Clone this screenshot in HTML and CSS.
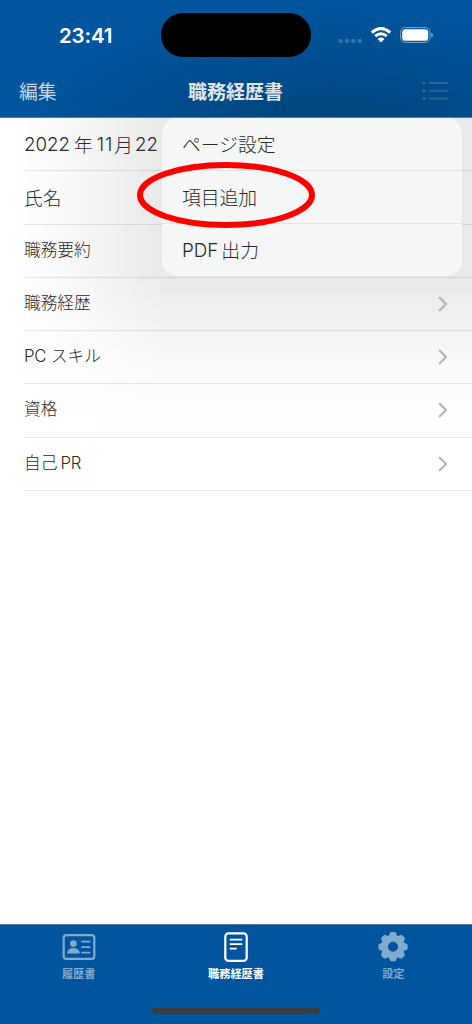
FILE: index.html
```html
<!DOCTYPE html>
<html lang="ja">
<head>
<meta charset="utf-8">
<title>職務経歴書</title>
<link rel="stylesheet" href="styles.css">
</head>
<body>
<div class="screen">
  <header class="header">
    <div class="status">
      <span class="time">23:41</span>
      <span class="island"></span>
      <div class="indicators">
        <svg class="cell" width="24" height="6" viewBox="0 0 24 6"><circle cx="2.6" cy="3" r="2.3"/><circle cx="9" cy="3" r="2.3"/><circle cx="15.4" cy="3" r="2.3"/><circle cx="21.8" cy="3" r="2.3"/></svg>
        <svg class="wifi" width="22" height="16" viewBox="0 0 22 16"><path d="M1.8 5.6Q11-2.6 20.2 5.6M5.2 9.1Q11 4.2 16.8 9.1" fill="none" stroke="#fff" stroke-width="2.9"/><path d="M7.6 12Q11 9.2 14.4 12L11 15.5Z" fill="#fff"/></svg>
        <svg class="battery" width="34" height="16" viewBox="0 0 34 16"><rect x=".6" y=".6" width="29.4" height="14.8" rx="4.8" fill="none" stroke="#7fa8ce" stroke-width="1"/><rect x="2.2" y="2.2" width="26" height="11.6" rx="3.4" fill="#fff"/><path d="M31.3 5.7Q33 6.3 33 8T31.3 10.3Z" fill="#7fa8ce"/></svg>
      </div>
    </div>
    <nav class="navbar">
      <span class="edit">編集</span>
      <h1 class="title">職務経歴書</h1>
      <svg class="list-icon" width="28" height="20" viewBox="0 0 28 20"><g fill="#2d659a"><circle cx="2" cy="2" r="1.6"/><circle cx="2" cy="9.8" r="1.6"/><circle cx="2" cy="17.6" r="1.6"/></g><path d="M7.5 2H25.5M7.5 9.8H25.5M7.5 17.6H25.5" stroke="#2d659a" stroke-width="1.8" stroke-linecap="round"/></svg>
    </nav>
  </header>
  <main class="content">
    <ul class="rows">
      <li class="row large date"><span class="latin">2022</span><span class="kanji year">年</span><span class="latin month">11</span><span class="kanji">月</span><span class="latin day">22</span></li>
      <li class="row large">氏名</li>
      <li class="row">職務要約</li>
      <li class="row">職務経歴<svg class="chevron" width="10" height="16" viewBox="0 0 10 16"><path d="M1.8 1.8L8 8L1.8 14.2"/></svg></li>
      <li class="row"><span><span class="latin pc">PC</span> スキル</span><svg class="chevron" width="10" height="16" viewBox="0 0 10 16"><path d="M1.8 1.8L8 8L1.8 14.2"/></svg></li>
      <li class="row">資格<svg class="chevron" width="10" height="16" viewBox="0 0 10 16"><path d="M1.8 1.8L8 8L1.8 14.2"/></svg></li>
      <li class="row"><span>自己<span class="latin pr">PR</span></span><svg class="chevron" width="10" height="16" viewBox="0 0 10 16"><path d="M1.8 1.8L8 8L1.8 14.2"/></svg></li>
    </ul>
    <div class="menu">
      <div class="item">ページ設定</div>
      <div class="item">項目追加</div>
      <div class="item"><span class="latin pdf">PDF</span>出力</div>
    </div>
    <svg class="ring" width="180" height="68" viewBox="0 0 180 68"><ellipse cx="90" cy="34" rx="86" ry="30"/></svg>
  </main>
  <footer class="tabs">
    <div class="tab"><svg width="34" height="32" viewBox="0 0 34 32"><rect x="1.7" y="4.2" width="30.6" height="23.6" rx="2.6" fill="none" stroke="currentColor" stroke-width="2.2"/><circle cx="11.4" cy="12.6" r="3.4" fill="currentColor"/><path d="M5 22.6Q5.4 17 11.4 17T17.8 22.6Z" fill="currentColor"/><path d="M20 10.6H27.6M20 16.1H27.6M20 21.6H27.6" stroke="currentColor" stroke-width="1.7" stroke-linecap="round"/></svg><span>履歴書</span></div>
    <div class="tab active"><svg width="34" height="32" viewBox="0 0 34 32"><rect x="6.3" y="2.3" width="21.4" height="27.6" rx="3.2" fill="none" stroke="currentColor" stroke-width="2.2"/><path d="M11.4 8.6H22.6M11.4 13.1H22.6M11.4 17.6H17" stroke="currentColor" stroke-width="1.8" stroke-linecap="round"/></svg><span>職務経歴書</span></div>
    <div class="tab"><svg width="34" height="32" viewBox="0 0 34 32"><g transform="translate(17 15.7)" fill="currentColor"><path fill-rule="evenodd" d="M0-11.7A11.7 11.7 0 1 1 0 11.7A11.7 11.7 0 1 1 0-11.7M0-5A5 5 0 1 0 0 5A5 5 0 1 0 0-5"/><path id="tooth" d="M-4.3-10.6L-3-13.6Q-2.7-14.6-1.6-14.6H1.6Q2.7-14.6 3-13.6L4.3-10.6Z"/><use href="#tooth" transform="rotate(45)"/><use href="#tooth" transform="rotate(90)"/><use href="#tooth" transform="rotate(135)"/><use href="#tooth" transform="rotate(180)"/><use href="#tooth" transform="rotate(225)"/><use href="#tooth" transform="rotate(270)"/><use href="#tooth" transform="rotate(315)"/></g></svg><span>設定</span></div>
    <span class="home"></span>
  </footer>
</div>
</body>
</html>
```
FILE: styles.css
```css
* { box-sizing: border-box; }
body { margin: 0; font-family: Inter, "Noto Sans CJK JP", sans-serif; color: #292929; }
.screen { width: 472px; height: 1024px; display: flex; flex-direction: column; background: #fff; }
.header {
  height: 118px; flex: none; color: #fff; border-bottom: 1px solid #56789f;
  background: radial-gradient(ellipse 330px 155px at 330px 160px, #00427a 0%, #00467f 30%, #004f91 70%, #00559e 100%);
}
.status { height: 70px; display: grid; grid-template-columns: 161px 150px 1fr; align-items: center; }
.time { padding-left: 59px; font-size: 20.5px; font-weight: 600; letter-spacing: -.15px; }
.island { height: 44px; border-radius: 22px; background: #000; }
.indicators { display: flex; align-items: center; padding-left: 27px; }
.cell { fill: #3573ac; margin-top: 11px; }
.wifi { margin-left: 8px; }
.battery { margin-left: 8px; }
.navbar { height: 47px; padding: 0 22px 5px 19px; display: grid; grid-template-columns: 101px 1fr 101px; align-items: center; }
.edit { font-size: 18.8px; color: #ced8e2; line-height: 28px; margin-top: 3px; }
.title { margin: 3px 0 0 2px; text-align: center; font-size: 19px; line-height: 28px; font-weight: 700; color: #e2e7eb; }
.list-icon { justify-self: end; }
.content {
  position: relative; flex: 1;
  background:
    linear-gradient(90deg, #fff 18px, rgba(255,255,255,.65) 75px, rgba(255,255,255,0) 165px),
    linear-gradient(180deg, #e9e9e8 0, #e9e9e8 155px, #f0f0ef 195px, #f8f8f8 238px, #fdfdfd 285px, #fff 330px);
}
.rows { list-style: none; margin: 0; padding: 0 0 0 24px; }
.row { height: 53.25px; display: flex; align-items: center; justify-content: space-between; border-bottom: 1px solid rgba(60,60,67,.13); font-size: 16.7px; font-weight: 300; padding: 0 24px 4px 0; }
.row.large { font-size: 18.7px; padding-bottom: 2px; }
.row.date { justify-content: flex-start; padding-bottom: 0; }
.latin { font-weight: 360; }
.kanji { font-size: 18.7px; padding-bottom: 2px; }
.year { margin: 0 4px; }
.month { letter-spacing: 1px; margin-right: 1px; }
.day { margin-left: 2px; }
.pc { letter-spacing: -.2px; }
.pr { margin-left: 3px; }
.chevron { fill: none; stroke: #b5b5b6; stroke-width: 2.3; stroke-linecap: round; stroke-linejoin: round; position: relative; top: 2px; }
.menu { position: absolute; left: 162px; top: 0; width: 300px; height: 158px; border-radius: 15px; background: #f5f7f6; }
.item { height: 53px; padding: 0 0 2px 20px; display: flex; align-items: center; font-size: 18.8px; font-weight: 300; border-bottom: 1px solid #e3e5e4; }
.item:last-child { border: 0; height: 52px; }
.pdf { margin-right: 3px; padding-top: 2px; }
.ring { position: absolute; left: 136px; top: 43px; fill: none; stroke: #f00; stroke-width: 6; }
.tabs { position: relative; height: 100px; border-top: 1px solid #56789f; background: #00559e; display: grid; grid-template-columns: repeat(3, 157.33px); align-items: start; }
.tab { padding-top: 6px; display: flex; flex-direction: column; align-items: center; color: #80aace; font-size: 11.2px; line-height: 16px; font-weight: 700; gap: 3px; }
.active { color: #fff; }
.home { position: absolute; left: 152px; bottom: 10px; width: 168px; height: 6px; border-radius: 3px; background: #3b3b3c; }
```
